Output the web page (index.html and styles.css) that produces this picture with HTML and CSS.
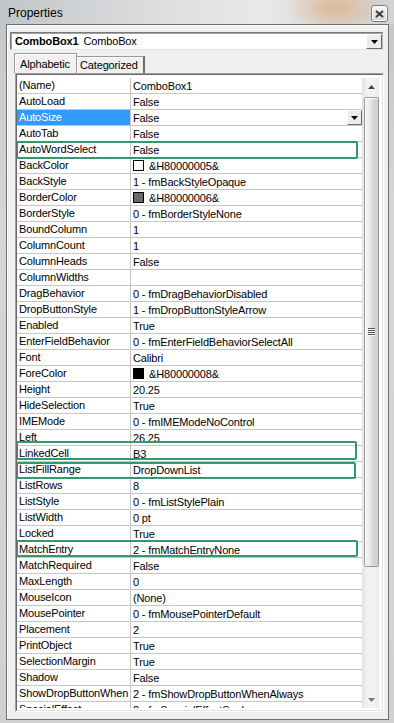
FILE: index.html
```html
<!DOCTYPE html>
<html lang="en">
<head>
    <meta charset="UTF-8">
    <title>Properties</title>
    <link rel="stylesheet" href="styles.css">
</head>
<body>
    <div class="titlebar">
        <span class="title">Properties</span>
        <span class="close-btn">
            <svg width="9" height="8" viewBox="0 0 9 8"><path d="M1 1L8 7M8 1L1 7" stroke="#3a3a3a" stroke-width="2"/></svg>
        </span>
    </div>

    <div class="panel">
        <div class="combo">
            <span class="combo-name">ComboBox1</span>
            <span>ComboBox</span>
            <span class="combo-btn">
                <svg width="7" height="4" viewBox="0 0 7 4"><path d="M0 0H7L3.5 4Z" fill="#000"/></svg>
            </span>
        </div>

        <div class="tabs">
            <div class="tab tab-active">Alphabetic</div>
            <div class="tab tab-cat">Categorized</div>
        </div>

        <div class="grid">
            <div class="grid-inner">
                <div class="rows">
                    <div class="row"><div class="name">(Name)</div><div class="value">ComboBox1</div></div>
                    <div class="row"><div class="name">AutoLoad</div><div class="value">False</div></div>
                    <div class="row"><div class="name selected">AutoSize</div><div class="value">False
                        <span class="drop-btn"><svg width="7" height="4" viewBox="0 0 7 4"><path d="M0 0H7L3.5 4Z" fill="#000"/></svg></span>
                    </div></div>
                    <div class="row"><div class="name">AutoTab</div><div class="value">False</div></div>
                    <div class="row mark"><div class="name">AutoWordSelect</div><div class="value">False</div></div>
                    <div class="row"><div class="name">BackColor</div><div class="value"><span class="swatch swatch-white"></span>&amp;H80000005&amp;</div></div>
                    <div class="row"><div class="name">BackStyle</div><div class="value">1 - fmBackStyleOpaque</div></div>
                    <div class="row"><div class="name">BorderColor</div><div class="value"><span class="swatch swatch-gray"></span>&amp;H80000006&amp;</div></div>
                    <div class="row"><div class="name">BorderStyle</div><div class="value">0 - fmBorderStyleNone</div></div>
                    <div class="row"><div class="name">BoundColumn</div><div class="value">1</div></div>
                    <div class="row"><div class="name">ColumnCount</div><div class="value">1</div></div>
                    <div class="row"><div class="name">ColumnHeads</div><div class="value">False</div></div>
                    <div class="row"><div class="name">ColumnWidths</div><div class="value"></div></div>
                    <div class="row"><div class="name">DragBehavior</div><div class="value">0 - fmDragBehaviorDisabled</div></div>
                    <div class="row"><div class="name">DropButtonStyle</div><div class="value">1 - fmDropButtonStyleArrow</div></div>
                    <div class="row"><div class="name">Enabled</div><div class="value">True</div></div>
                    <div class="row"><div class="name">EnterFieldBehavior</div><div class="value">0 - fmEnterFieldBehaviorSelectAll</div></div>
                    <div class="row"><div class="name">Font</div><div class="value">Calibri</div></div>
                    <div class="row"><div class="name">ForeColor</div><div class="value"><span class="swatch swatch-black"></span>&amp;H80000008&amp;</div></div>
                    <div class="row"><div class="name">Height</div><div class="value">20.25</div></div>
                    <div class="row"><div class="name">HideSelection</div><div class="value">True</div></div>
                    <div class="row"><div class="name">IMEMode</div><div class="value">0 - fmIMEModeNoControl</div></div>
                    <div class="row"><div class="name">Left</div><div class="value">26.25</div></div>
                    <div class="row mark mark-linked"><div class="name">LinkedCell</div><div class="value">B3</div></div>
                    <div class="row mark mark-fill"><div class="name">ListFillRange</div><div class="value">DropDownList</div></div>
                    <div class="row"><div class="name">ListRows</div><div class="value">8</div></div>
                    <div class="row"><div class="name">ListStyle</div><div class="value">0 - fmListStylePlain</div></div>
                    <div class="row"><div class="name">ListWidth</div><div class="value">0 pt</div></div>
                    <div class="row"><div class="name">Locked</div><div class="value">True</div></div>
                    <div class="row mark mark-match"><div class="name">MatchEntry</div><div class="value">2 - fmMatchEntryNone</div></div>
                    <div class="row"><div class="name">MatchRequired</div><div class="value">False</div></div>
                    <div class="row"><div class="name">MaxLength</div><div class="value">0</div></div>
                    <div class="row"><div class="name">MouseIcon</div><div class="value">(None)</div></div>
                    <div class="row"><div class="name">MousePointer</div><div class="value">0 - fmMousePointerDefault</div></div>
                    <div class="row"><div class="name">Placement</div><div class="value">2</div></div>
                    <div class="row"><div class="name">PrintObject</div><div class="value">True</div></div>
                    <div class="row"><div class="name">SelectionMargin</div><div class="value">True</div></div>
                    <div class="row"><div class="name">Shadow</div><div class="value">False</div></div>
                    <div class="row"><div class="name">ShowDropButtonWhen</div><div class="value">2 - fmShowDropButtonWhenAlways</div></div>
                    <div class="row"><div class="name">SpecialEffect</div><div class="value">2 - fmSpecialEffectSunken</div></div>
                </div>

                <div class="scrollbar">
                    <div class="sb-btn">
                        <svg width="7" height="4" viewBox="0 0 7 4"><path d="M0 4H7L3.5 0Z" fill="#444"/></svg>
                    </div>
                    <div class="thumb"><span class="grip"></span></div>
                    <div class="sb-track"></div>
                    <div class="sb-btn">
                        <svg width="7" height="4" viewBox="0 0 7 4"><path d="M0 0H7L3.5 4Z" fill="#777"/></svg>
                    </div>
                </div>
            </div>
        </div>
    </div>
</body>
</html>
```

FILE: styles.css
```css
* {
    box-sizing: border-box;
}
body {
    margin: 0;
    width: 394px;
    height: 723px;
    overflow: hidden;
    font-family: "Liberation Sans", Arial, sans-serif;
    font-size: 11px;
    letter-spacing: -0.15px;
    color: #000;
    background: linear-gradient(to bottom, #c3c6c9, #d4d6d8 30%, #cfd1d3);
}
.titlebar {
    height: 24px;
    display: flex;
    align-items: center;
    justify-content: space-between;
    padding: 0 6px 0 8px;
    background:
        radial-gradient(ellipse 50px 26px at 335px 8px, rgba(220, 182, 146, 0.95), rgba(220, 182, 146, 0)),
        linear-gradient(to right, #c2c5c8, #d9dbdd 35%, #e9e9e9 65%, #d2d2d2);
}
.title {
    font-size: 12px;
    letter-spacing: 0;
    margin-top: 1px;
}
.close-btn {
    width: 17px;
    height: 17px;
    margin-top: 3px;
    border: 1px solid #7a7a7a;
    border-radius: 3px;
    background: linear-gradient(#f6f6f6, #d6d6d6);
    box-shadow: inset 0 0 0 1px #fff;
    display: flex;
    align-items: center;
    justify-content: center;
}
.panel {
    margin-left: 6px;
    width: 383px;
    height: 696px;
    border: 1px solid #6e6e6e;
    background: #f0f0f0;
    box-shadow: inset 1px 1px 0 #fff;
    padding: 7px 0 0 3px;
}

/* object selector */
.combo {
    display: flex;
    align-items: center;
    width: 373px;
    height: 18px;
    background: #fff;
    border: 1px solid #7a7a7a;
    border-right-color: #b8b8b8;
    border-bottom-color: #e3e3e3;
    box-shadow: inset 1px 1px 0 #a0a0a0;
    padding-left: 4px;
}
.combo-name {
    font-weight: bold;
    margin-right: 5px;
}
.combo-btn {
    margin-left: auto;
    width: 16px;
    height: 15px;
    margin-top: 1px;
    background: #ececec;
    border: 1px solid;
    border-color: #fff #6a6a6a #6a6a6a #fff;
    display: flex;
    align-items: center;
    justify-content: center;
}

/* tabs */
.tabs {
    display: flex;
    align-items: flex-end;
    height: 20px;
    margin: 3px 0 0 4px;
}
.tab {
    height: 17px;
    padding: 2px 0 0 3px;
    border: 1px solid #9a9a9a;
    border-bottom: none;
    box-shadow: inset 1px 1px 0 #fff;
    background: #f0f0f0;
}
.tab-active {
    width: 63px;
    height: 20px;
    padding: 4px 0 0 5px;
}
.tab-cat {
    width: 68px;
    border-left: none;
    border-right: 2px solid #6d6d6d;
}

/* property grid */
.grid {
    margin-left: 5px;
    width: 369px;
    height: 639px;
    border: 1px solid;
    border-color: #a0a0a0 #fff #fff #a0a0a0;
}
.grid-inner {
    display: flex;
    height: 100%;
    border: 1px solid;
    border-color: #696969 #e3e3e3 #e3e3e3 #696969;
    background: #fff;
    padding: 3px 3px 0 0;
}
.rows {
    width: 345px;
    height: 630px;
    overflow: hidden;
}
.row {
    position: relative;
    display: flex;
    height: 16px;
    border-bottom: 1px solid #c6c6c6;
}
.name {
    width: 114px;
    flex: none;
    padding-left: 2px;
    line-height: 15px;
    border-right: 1px solid #c6c6c6;
    white-space: nowrap;
    overflow: hidden;
}
.name.selected {
    background: #3399ff;
    color: #fff;
}
.value {
    flex: 1;
    display: flex;
    align-items: center;
    padding-left: 2px;
    white-space: nowrap;
}
.drop-btn {
    margin-left: auto;
    width: 15px;
    height: 15px;
    background: #ececec;
    border: 1px solid;
    border-color: #fff #6a6a6a #6a6a6a #fff;
    display: flex;
    align-items: center;
    justify-content: center;
}
.swatch {
    width: 11px;
    height: 11px;
    margin-right: 5px;
    border: 1px solid #000;
}
.swatch-white {
    background: #fff;
}
.swatch-gray {
    background: #696969;
}
.swatch-black {
    background: #000;
}

/* green annotation boxes */
.mark::after {
    content: "";
    position: absolute;
    z-index: 1;
    left: -1px;
    right: 4px;
    top: -1px;
    bottom: -2px;
    border: 2px solid #2f9a6c;
    border-radius: 2px;
}
.mark-linked::after {
    top: -5px;
    bottom: 1px;
    right: 5px;
}
.mark-fill::after {
    top: 0;
    bottom: -2px;
    right: 6px;
}
.mark-match::after {
    top: -2px;
    bottom: 0;
}

/* scrollbar */
.scrollbar {
    width: 17px;
    height: 630px;
    display: flex;
    flex-direction: column;
    align-items: center;
    border-left: 1px solid #e2e2e2;
    background: linear-gradient(to right, #e6e6e6, #f3f3f3 30%, #f3f3f3 70%, #e9e9e9);
}
.sb-btn {
    width: 100%;
    height: 17px;
    flex: none;
    display: flex;
    align-items: center;
    justify-content: center;
}
.thumb {
    width: 15px;
    height: 470px;
    margin-top: 2px;
    flex: none;
    border: 1px solid #979797;
    border-radius: 2px;
    background: linear-gradient(to right, #f4f4f4, #e9e9e9 45%, #d9d9d9 55%, #cecece);
    box-shadow: inset 1px 1px 0 #fff;
    display: flex;
    align-items: center;
    justify-content: center;
}
.grip {
    width: 7px;
    height: 8px;
    background: repeating-linear-gradient(to bottom, #5a5a5a 0, #5a5a5a 1px, #f8f8f8 1px, #f8f8f8 2px);
}
.sb-track {
    flex: 1;
}
```
